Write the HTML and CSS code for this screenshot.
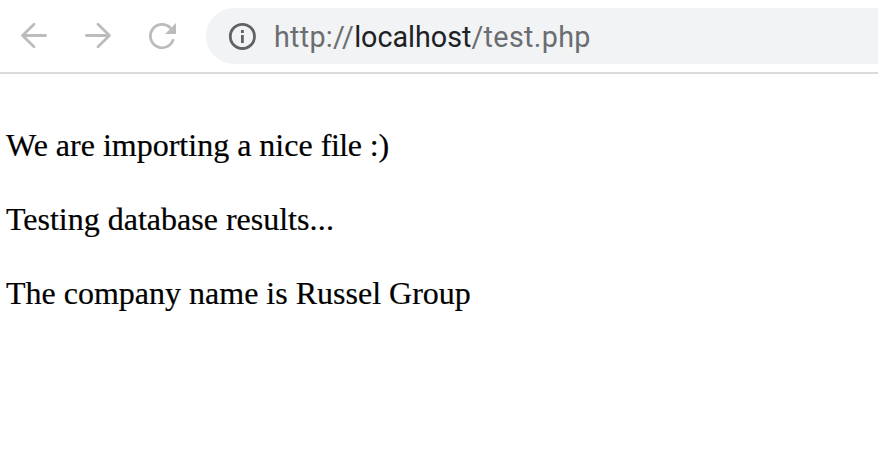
FILE: index.html
```html
<!DOCTYPE html>
<html lang="en">
<head>
<meta charset="utf-8">
<title>test.php</title>
<link rel="stylesheet" href="styles.css">
</head>
<body>
<header class="toolbar">
  <svg class="icon" viewBox="0 0 32 32"><path d="M27.500 15.500h-23M16 4.300L4.500 15.500 16 26.800"/></svg>
  <svg class="icon" viewBox="0 0 32 32"><path d="M4.500 15.500h23M16 4.300l11.500 11.200L16 26.800"/></svg>
  <svg class="icon" viewBox="0 0 32 32"><path d="M24.300 7.700A11.700 11.700 0 1 0 27 20.300"/><path class="solid" d="M30 3v11H19z"/></svg>
  <div class="address">
    <svg class="info" viewBox="0 0 28 28"><circle cx="14.400" cy="14.400" r="12.100"/><path d="M14.400 13v8M14.400 8v3"/></svg>
    <span class="url"><span class="scheme">http://</span><span class="host">localhost</span><span class="path">/test.php</span></span>
  </div>
</header>
<main class="page">
  <p class="line">We are importing a nice <span class="tight">file</span> :)</p>
  <p class="line">Testing database results<span class="dots">...</span></p>
  <p class="line">The company name is Russel Group</p>
</main>
</body>
</html>
```

FILE: styles.css
```css
* { box-sizing: border-box; }
body { margin: 0; background: #fff; overflow: hidden; }
.toolbar {
  display: flex;
  align-items: center;
  gap: 32px;
  height: 74px;
  padding-left: 18px;
  border-bottom: 2px solid #dadbdc;
}
.icon {
  flex: none;
  width: 32px;
  height: 32px;
  fill: none;
  stroke: #babcbe;
  stroke-width: 2.8;
  stroke-linecap: round;
  stroke-linejoin: round;
}
.icon .solid { fill: #babcbe; stroke: none; }
.address {
  display: flex;
  flex: 1;
  align-items: center;
  gap: 18px;
  height: 56px;
  margin-left: -4px;
  padding-left: 22px;
  border-radius: 28px 0 0 28px;
  background: #f1f3f4;
}
.info { width: 28px; height: 28px; fill: none; stroke: #5f6368; stroke-width: 2.8; }
.url { padding-top: 2px; color: #6b6d70; font: 28.7px/36px Roboto, sans-serif; white-space: nowrap; }
.scheme { letter-spacing: 0.28px; }
.host { color: #202124; letter-spacing: 0; }
.path { letter-spacing: 0.35px; }
.page { padding: 53px 6px 0; color: #000; font: 32px/36px "Liberation Serif", serif; }
.line { width: max-content; margin: 0 0 38px; -webkit-text-stroke: 0.2px #000; }
.tight { letter-spacing: -0.4px; }
.dots { letter-spacing: 0.3px; }
```
